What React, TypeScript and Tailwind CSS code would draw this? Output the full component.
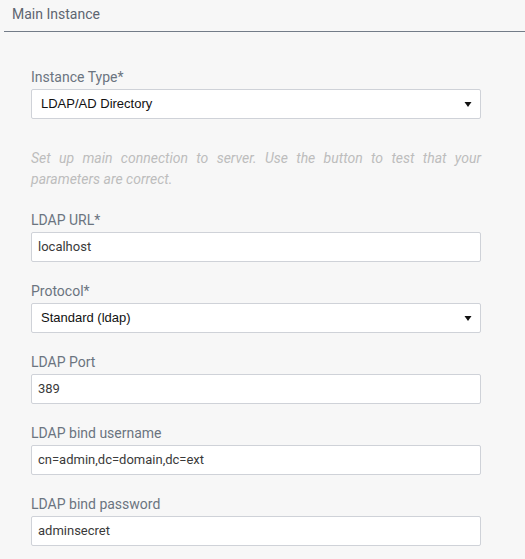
import React from "react";

const Label = ({ children }: { children: React.ReactNode }) => (
  <div className="h-[20px] leading-[20px] text-[14px] text-[#6b7480] mb-[2px]">{children}</div>
);

const Input = ({ value }: { value: string }) => (
  <div className="h-[30px] bg-white border border-[#cfd2d8] rounded-[2px] px-[6px] flex items-center text-[13px] text-[#3a3a3a] mb-[19px]">
    {value}
  </div>
);

const Select = ({ value, mb = "mb-[19px]" }: { value: string; mb?: string }) => (
  <div
    className={`h-[30px] bg-white border border-[#cfd2d8] rounded-[2px] pl-[9px] pr-[8px] flex items-center justify-between text-[13px] text-[#111] ${mb}`}
    style={{ fontFamily: '"Liberation Sans", Arial, sans-serif' }}
  >
    <span>{value}</span>
    <svg width="8" height="6" viewBox="0 0 8 6">
      <polygon points="0.5,1 7.5,1 4,6" fill="#111" />
    </svg>
  </div>
);

export default function App() {
  return (
    <div
      className="w-[525px] h-[559px] bg-[#f7f7f7] overflow-hidden"
      style={{ fontFamily: 'Roboto, "Open Sans", sans-serif' }}
    >
      <div className="ml-[4px] h-[32px] border-b border-[#737c88] pl-[8px] flex items-center text-[14px] text-[#5d6571] pb-[3px]">
        Main Instance
      </div>
      <div className="pl-[31px] pr-[44px] pt-[35px]">
        <Label>Instance Type*</Label>
        <Select value="LDAP/AD Directory" mb="mb-[29px]" />
        <p className="italic text-[14px] leading-[21px] text-[#bdbdbd] text-justify mb-[20px]">
          Set up main connection to server. Use the button to test that your parameters are correct.
        </p>
        <Label>LDAP URL*</Label>
        <Input value="localhost" />
        <Label>Protocol*</Label>
        <Select value="Standard (ldap)" />
        <Label>LDAP Port</Label>
        <Input value="389" />
        <Label>LDAP bind username</Label>
        <Input value="cn=admin,dc=domain,dc=ext" />
        <Label>LDAP bind password</Label>
        <Input value="adminsecret" />
      </div>
    </div>
  );
}
